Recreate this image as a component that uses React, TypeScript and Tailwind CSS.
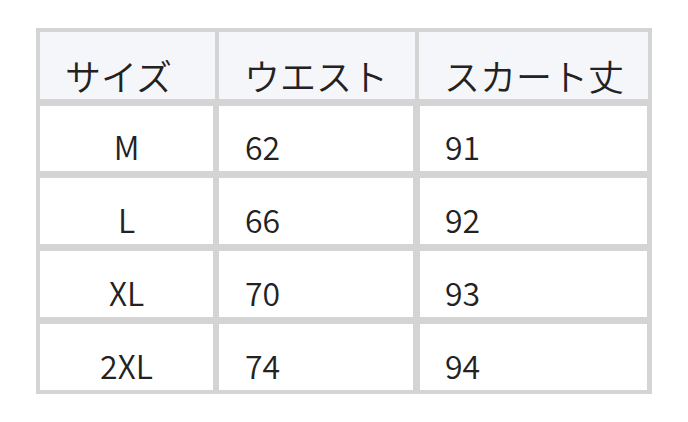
const rows = [
  { size: "M", waist: "62", length: "91", h: "h-[65px]" },
  { size: "L", waist: "66", length: "92", h: "h-[66px]" },
  { size: "XL", waist: "70", length: "93", h: "h-[66px]" },
  { size: "2XL", waist: "74", length: "94", h: "h-[66px]" },
];

export default function App() {
  return (
    <div
      className="min-h-[422px] w-[688px] bg-white pl-9 pt-7 font-[350] text-[#222]"
      style={{ fontFamily: '"Noto Sans CJK JP", "Noto Sans", sans-serif' }}
    >
      <div className="flex w-[616px] flex-col gap-[7px] bg-[#d4d4d4] p-1">
        <div className="grid h-[67px] grid-cols-[175px_196px_229px] gap-x-1">
          {["サイズ", "ウエスト", "スカート丈"].map((t) => (
            <div key={t} className="flex items-end bg-[#f5f6fa] pl-[25px] text-[36px] leading-[48px]">
              {t}
            </div>
          ))}
        </div>
        {rows.map((r) => (
          <div key={r.size} className={`grid ${r.h} grid-cols-[173px_194px_228px] gap-x-[6px]`}>
            <div className="flex items-end justify-center bg-white pb-[2px] text-[32px] leading-[46px]">{r.size}</div>
            <div className="flex items-end bg-white pb-[2px] pl-[26px] text-[32px] leading-[46px]">{r.waist}</div>
            <div className="ml-[1px] flex items-end bg-white pb-[2px] pl-[25px] text-[32px] leading-[46px]">{r.length}</div>
          </div>
        ))}
      </div>
    </div>
  );
}
